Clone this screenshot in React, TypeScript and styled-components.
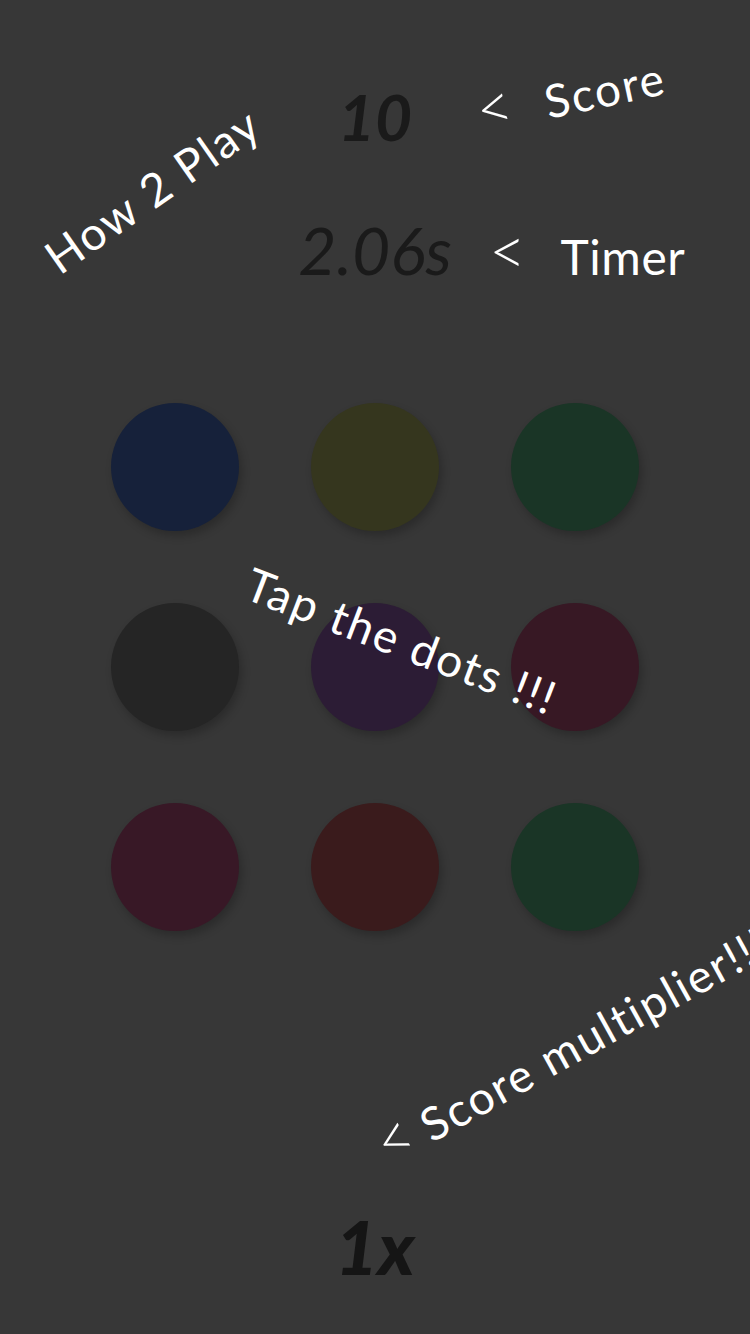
import React from "react";
import styled, { createGlobalStyle } from "styled-components";

const Global = createGlobalStyle`
  html, body { margin: 0; padding: 0; background: #373737; }
  body { font-family: "Lato", "Noto Sans", sans-serif; }
`;

const Screen = styled.div`
  position: relative;
  width: 750px;
  height: 1334px;
  overflow: hidden;
  background: #373737;
  display: flex;
  flex-direction: column;
  align-items: center;
`;

const StatRow = styled.div<{ $top: number }>`
  width: 100%;
  margin-top: ${(p) => p.$top}px;
  display: grid;
  grid-template-columns: 1fr auto 1fr;
  align-items: baseline;
  column-gap: 36px;
`;

const Value = styled.div<{ $size: number; $weight: number }>`
  grid-column: 2;
  font-family: "Lato", "Noto Sans", sans-serif;
  font-style: italic;
  font-size: ${(p) => p.$size}px;
  font-weight: ${(p) => p.$weight};
  line-height: 1;
  color: #1a1a1a;
`;

const InlineNote = styled.div`
  grid-column: 3;
  display: flex;
  align-items: baseline;
  gap: 33px;
  font-size: 48px;
  font-weight: 400;
  letter-spacing: 0.6px;
  line-height: 1;
  color: #ffffff;
`;

const Caret = styled.span<{ $gap: number }>`
  display: inline-block;
  font-size: 1.4em;
  font-weight: 300;
  line-height: 0.8;
  margin-right: ${(p) => p.$gap}px;
  transform: scaleX(0.95);
`;

const Grid = styled.div`
  margin-top: 120px;
  display: grid;
  grid-template-columns: repeat(3, 128px);
  grid-auto-rows: 128px;
  gap: 72px;
`;

const Dot = styled.div<{ $color: string }>`
  width: 128px;
  height: 128px;
  border-radius: 50%;
  background: ${(p) => p.$color};
  box-shadow: 3px 5px 9px rgba(0, 0, 0, 0.22);
`;

const Multiplier = styled.div`
  margin-top: auto;
  margin-bottom: 50px;
  font-family: "Lato", "Noto Sans", sans-serif;
  font-style: italic;
  font-weight: 900;
  font-size: 74px;
  line-height: 1;
  color: #151515;
`;

const Note = styled.div<{ $x: number; $y: number; $angle: number; $size: number }>`
  position: absolute;
  left: ${(p) => p.$x}px;
  top: ${(p) => p.$y}px;
  transform-origin: 0 50%;
  transform: translateY(-50%) rotate(${(p) => p.$angle}deg);
  white-space: nowrap;
  font-family: "Lato", "Noto Sans", sans-serif;
  font-size: ${(p) => p.$size}px;
  font-weight: 400;
  letter-spacing: 2px;
  line-height: 1;
  color: #ffffff;
`;

const dots = [
  "#16213a",
  "#35361e",
  "#1a3526",
  "#252525",
  "#2c1c35",
  "#371824",
  "#381826",
  "#3a1b1c",
  "#1a3526",
];

export default function App() {
  return (
    <>
      <Global />
      <Screen>
        <StatRow $top={85}>
          <Value $size={64} $weight={700}>10</Value>
        </StatRow>
        <StatRow $top={68}>
          <Value $size={66} $weight={400}>2.06s</Value>
          <InlineNote>
            <Caret $gap={0}>&lt;</Caret>
            <span>Timer</span>
          </InlineNote>
        </StatRow>
        <Grid>
          {dots.map((c, i) => (
            <Dot key={i} $color={c} />
          ))}
        </Grid>
        <Multiplier>1x</Multiplier>

        <Note $x={50} $y={262} $angle={-35} $size={46}>How 2 Play</Note>
        <Note $x={476} $y={112} $angle={-12} $size={46}>
          <Caret $gap={30}>&lt;</Caret>Score
        </Note>
        <Note $x={248} $y={582} $angle={21} $size={46}>Tap the dots !!!</Note>
        <Note $x={378} $y={1148} $angle={-29} $size={46}>
          <Caret $gap={10}>&lt;</Caret>Score multiplier!!!
        </Note>
      </Screen>
    </>
  );
}
